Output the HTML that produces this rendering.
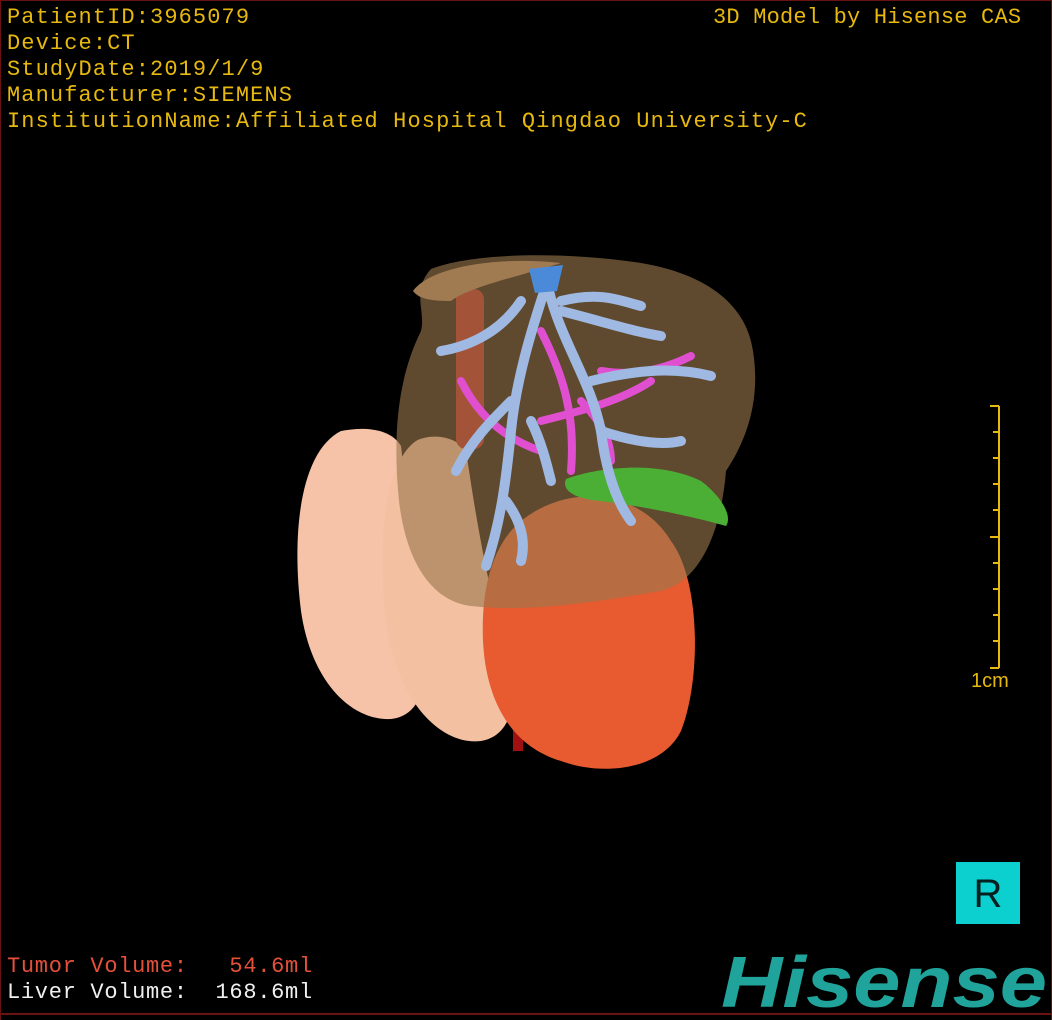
<!DOCTYPE html>
<html><head><meta charset="utf-8"><style>
html,body{margin:0;padding:0;background:#000;}
#w{position:relative;width:1052px;height:1020px;overflow:hidden;background:#000;box-sizing:border-box;border:1px solid #6a1212;border-bottom:none;}
#bb{position:absolute;left:0;top:1012px;width:1052px;height:2px;background:#6a1212;}
.t{position:absolute;font-family:"Liberation Mono","DejaVu Sans Mono",monospace;font-size:22px;color:#e7b90f;white-space:pre;line-height:26px;letter-spacing:1.1px;}
</style></head><body><div id="w">
<div class="t" style="left:6px;top:4px">PatientID:3965079
Device:CT
StudyDate:2019/1/9
Manufacturer:SIEMENS
InstitutionName:Affiliated Hospital Qingdao University-C</div>
<div class="t" style="left:712px;top:4px;letter-spacing:0.2px">3D Model by Hisense CAS</div>
<div class="t" style="left:6px;top:953px;color:#e5503a;letter-spacing:0.7px">Tumor Volume:   54.6ml</div>
<div class="t" style="left:6px;top:979px;color:#f0f0f0;letter-spacing:0.7px">Liver Volume:  168.6ml</div>
<svg style="position:absolute;left:0;top:0" width="1052" height="1020">
 <g stroke="#e7b90f" stroke-width="2" fill="none">
  <line x1="998" y1="405" x2="998" y2="667"/>
  <line x1="989" y1="405" x2="998" y2="405"/><line x1="989" y1="667" x2="998" y2="667"/>
  <line x1="992" y1="431" x2="998" y2="431"/><line x1="992" y1="457" x2="998" y2="457"/>
  <line x1="992" y1="483" x2="998" y2="483"/><line x1="992" y1="509" x2="998" y2="509"/>
  <line x1="989" y1="536" x2="998" y2="536"/><line x1="992" y1="562" x2="998" y2="562"/>
  <line x1="992" y1="588" x2="998" y2="588"/><line x1="992" y1="614" x2="998" y2="614"/>
  <line x1="992" y1="640" x2="998" y2="640"/>
 </g>
 <text x="970" y="686" font-family="Liberation Sans,sans-serif" font-size="20" fill="#e7b90f">1cm</text>
 <path d="M340 430 C300 450 290 530 300 610 C310 680 350 720 390 718 C420 715 430 680 420 640 C400 560 405 480 400 445 C390 428 365 425 340 430Z" fill="#f6c3a8"/>
 <path d="M415 440 C385 460 375 540 385 620 C395 700 440 745 480 740 C510 735 520 700 505 650 C480 560 470 480 465 450 C455 435 430 432 415 440Z" fill="#f3c0a2"/>
 <rect x="455" y="288" width="28" height="160" rx="10" fill="#b01818"/>
 <rect x="512" y="690" width="10" height="60" fill="#a01010"/>
 <path d="M520 520 C570 480 640 490 670 540 C700 580 700 680 680 730 C660 770 600 775 560 760 C510 745 485 700 482 640 C480 590 490 545 520 520Z" fill="#e85a30"/>
 <path d="M430 268 C470 252 560 250 640 262 C700 272 745 300 752 350 C760 400 745 440 725 470 C720 530 700 580 660 590 C600 600 530 612 470 605 C430 600 405 560 398 500 C392 440 395 380 420 330 C425 310 410 290 430 268Z" fill="#9a774c" opacity="0.62"/>
 <path d="M412 290 C430 265 500 255 560 262 C520 275 470 285 450 300 C430 300 418 298 412 290Z" fill="#a07a50"/>
 <path d="M565 478 C600 465 660 460 700 480 C720 495 732 515 725 525 C690 515 640 505 600 500 C575 498 560 490 565 478Z" fill="#4caf35"/>
 <g stroke="#e04fd0" stroke-width="8" fill="none" stroke-linecap="round">
  <path d="M460 380 C480 420 510 440 540 450"/><path d="M540 330 C560 370 575 410 570 470"/>
  <path d="M540 420 C580 410 620 400 650 380"/><path d="M600 370 C630 375 660 370 690 355"/>
  <path d="M580 400 C600 420 610 440 610 460"/>
 </g>
 <g stroke="#9fb9e2" stroke-width="10" fill="none" stroke-linecap="round">
  <path d="M545 285 C530 330 515 380 510 430 C505 480 500 520 485 565"/>
  <path d="M548 290 C560 340 590 380 600 430 C605 470 615 500 630 520"/>
  <path d="M520 300 C500 330 470 345 440 350"/><path d="M560 310 C600 320 630 330 660 335"/>
  <path d="M590 380 C630 370 670 365 710 375"/><path d="M510 400 C490 420 470 440 455 470"/>
  <path d="M530 420 C540 440 545 460 550 480"/><path d="M600 430 C630 440 660 445 680 440"/>
  <path d="M505 500 C520 520 525 540 520 560"/><path d="M560 300 C600 290 620 300 640 305"/>
 </g>
 <path d="M528 268 L562 264 L556 290 L534 292Z" fill="#4a8ad8"/>
 <rect x="955" y="861" width="64" height="62" fill="#0ccfcf"/>
 <text x="987" y="906" text-anchor="middle" font-family="Liberation Sans,sans-serif" font-size="40" fill="#062020">R</text>
 <text x="720" y="1006" font-family="Liberation Sans,sans-serif" font-weight="bold" font-style="italic" font-size="72" fill="#1fa39a" textLength="326" lengthAdjust="spacingAndGlyphs">Hisense</text>
</svg>
<div id="bb"></div>
</div></body></html>
